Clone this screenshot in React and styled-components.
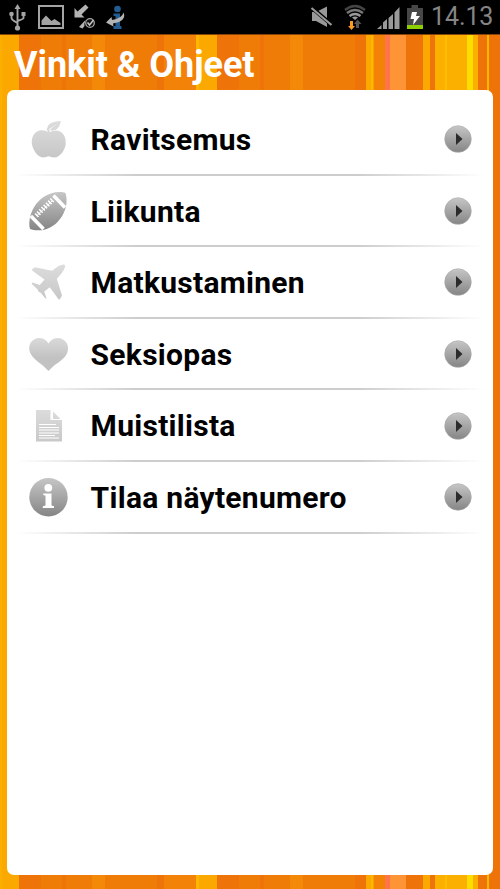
import React from "react";
import styled, { createGlobalStyle } from "styled-components";

const GlobalStyle = createGlobalStyle`
  * {
    box-sizing: border-box;
  }

  body {
    margin: 0;
    background: #000;
    font-family: Roboto, "Liberation Sans", sans-serif;
  }
`;

// [end of the stripe in px, colour]
const stripes = [
  [2, "#fbb000"],
  [19, "#fba800"],
  [41, "#ee7409"],
  [62, "#f07c08"],
  [66, "#ee7409"],
  [92, "#f07c08"],
  [105, "#f48808"],
  [157, "#f07c08"],
  [164.5, "#ee7409"],
  [196, "#f28208"],
  [199, "#ffb600"],
  [217, "#fba800"],
  [239, "#ee7409"],
  [260, "#f07c08"],
  [264, "#ee7409"],
  [290, "#f07c08"],
  [303, "#f48808"],
  [355, "#f07c08"],
  [366, "#ee7409"],
  [371, "#fba800"],
  [373, "#ffb800"],
  [374, "#fba000"],
  [385.5, "#f28208"],
  [390, "#ff7448"],
  [406, "#ff9436"],
  [423.5, "#ee7409"],
  [430, "#fba800"],
  [435, "#ee7409"],
  [445, "#fbb000"],
  [447, "#ffbc00"],
  [467, "#fbb000"],
  [473, "#fddc00"],
  [478, "#fbb000"],
  [487, "#ee7409"],
  [489, "#ffb800"],
  [500, "#ee7409"],
];

const stripeImage = stripes
  .map(([end, color], i) => `${color} ${i ? stripes[i - 1][0] : 0}px ${end}px`)
  .join(", ");

const Screen = styled.div`
  width: 500px;
  height: 889px;
  display: flex;
  flex-direction: column;
  overflow: hidden;
  background: linear-gradient(to right, ${stripeImage});
`;

const StatusBar = styled.div`
  flex: none;
  height: 34px;
  padding: 0 7px 0 6px;
  background: #000;
  display: flex;
  align-items: center;
  justify-content: space-between;
`;

const StatusIcons = styled.div`
  display: flex;
  align-items: center;

  svg {
    display: block;
  }
`;

const Clock = styled.span`
  width: 62px;
  margin-left: 5px;
  color: #858585;
  font-size: 25px;
  font-weight: 400;
  line-height: 34px;
  letter-spacing: -0.1px;
  white-space: nowrap;
`;

const Title = styled.h1`
  flex: none;
  height: 56px;
  margin: 0;
  padding: 0 14px;
  border-top: 1px solid #85440a;
  color: #fff;
  font-size: 36px;
  font-weight: 700;
  line-height: 60px;
  letter-spacing: -0.05px;
  white-space: nowrap;
`;

const Panel = styled.main`
  flex: 1;
  margin: 0 7px 14px;
  padding-top: 14px;
  border-radius: 7px;
  background: #fff;
`;

const List = styled.ul`
  margin: 0;
  padding: 0;
  list-style: none;
`;

const Row = styled.li`
  height: 71.6px;
  padding: 0 21px 1px;
  display: flex;
  align-items: center;
  background: linear-gradient(
      to right,
      transparent 8px,
      #cdcdcd 130px,
      #cdcdcd 350px,
      transparent 478px
    )
    bottom / 100% 2px no-repeat;
`;

const RowIcon = styled.svg`
  flex: none;
  width: 40px;
  height: 40px;
  margin-right: 22.6px;
`;

const Label = styled.span`
  flex: 1;
  padding-top: 1.5px;
  color: #000;
  font-size: 30px;
  font-weight: 700;
  line-height: 40px;
  letter-spacing: 0.28px;
  white-space: nowrap;
`;

const Arrow = styled.svg`
  flex: none;
  width: 28px;
  height: 28px;
`;

const Apple = () => (
  <g fill="url(#light)">
    <path d="M20 13.2C17 10.7 11.500 10.500 8 13.200C4 16.300 3 22 4.400 27C6 33 10.500 38.500 15.500 38.500C17.500 38.500 19 37.200 20.500 37.200C22.500 37.200 23.500 38.500 26 38.500C31.500 38.500 36.700 32 37.600 25.500C38.300 20 36.500 15 32.500 12.700C28.800 10.700 24.500 11.500 22 13.300L20.700 9.500L18.400 9.600Z" />
    <path d="M19.800 11C18 5.500 24 2 32.700 2C32.200 8.500 27.500 13.200 21.600 11L28 5.400Z" />
  </g>
);

const Football = () => (
  <>
    <path
      fill="url(#dark)"
      d="M2 38C-1 24 8 7 23 2.400C28 .8 34 .7 37.500 2C42 17 32 34 18 38.200C12 40 6 39.500 2 38Z"
    />
    <g fill="none" stroke="#fff">
      <path strokeWidth="3.600" d="M25.500 4.500L37 16.500M2.800 25L15.500 38" />
      <path strokeWidth="0.900" d="M9 24.500L24.500 9.500" />
      <path
        strokeWidth="1.500"
        d="M7 22.500L10.500 26M9 20.500L12.500 24M11.200 18.200L14.700 21.700M13.400 16L16.900 19.500M15.600 13.900L19.100 17.400M17.900 11.700L21.400 15.200M20.100 9.600L23.600 13.100M22.300 7.500L25.800 11"
      />
    </g>
  </>
);

const Plane = () => (
  <path
    fill="url(#light)"
    d="M36.800 3C38 4 36 8.500 33 12L28.800 16.700L34 33.500L31.800 37.500L30.500 37.300L21.800 25.300L16.300 29.600L18.600 36.800L17.200 36.300L12.700 30.700L11 30L10.300 29.300L9.700 27.400L3.600 21.700L4.500 20.400L11.800 23L16.500 17.500L4.400 8.800L4 7.300L7 5.200L24 8.800L29.500 4.800C32.500 2.800 35.500 1.800 36.800 3Z"
  />
);

const Heart = () => (
  <path
    fill="url(#heart)"
    d="M20.500 9.500C17 3.700 11 2.700 6.500 5.200C1 8.300 -.2 14.500 2.800 20C6.200 26.500 14 29.500 20.500 37C27 29.500 35.500 26.500 38.700 20C41.500 14.300 40 8.100 34.600 5.200C30 2.800 24 3.800 20.500 9.500Z"
  />
);

const Note = () => (
  <>
    <path fill="url(#light)" d="M8 4H22.500V14H34V35.500H8Z" />
    <path fill="url(#light)" d="M25 5.500L32.500 13H25Z" />
    <path
      stroke="#fff"
      strokeWidth="1.100"
      d="M11 18.500H28M11 21.500H31M11 24H31M11 27H31M11 29.500H27M11 32H31"
    />
  </>
);

const Info = () => (
  <>
    <circle cx="20.500" cy="20.200" r="19.200" fill="url(#dark)" />
    <circle cx="20.300" cy="10.800" r="3.900" fill="#fff" />
    <path fill="#fff" d="M15.300 16.500H23.500V28.500L26 29.200V31H14.800V29.200L17.500 28.500V18.700L15.300 18Z" />
  </>
);

const items = [
  { label: "Ravitsemus", icon: Apple },
  { label: "Liikunta", icon: Football },
  { label: "Matkustaminen", icon: Plane },
  { label: "Seksiopas", icon: Heart },
  { label: "Muistilista", icon: Note },
  { label: "Tilaa näytenumero", icon: Info },
];

const Gradients = () => (
  <svg width="0" height="0" display="block">
    <defs>
      <linearGradient id="light" x1="0" y1="0" x2="0" y2="40" gradientUnits="userSpaceOnUse">
        <stop offset="0" stopColor="#dedede" />
        <stop offset="1" stopColor="#c6c6c6" />
      </linearGradient>
      <linearGradient id="heart" x1="0" y1="0" x2="0" y2="1">
        <stop offset="0" stopColor="#dadada" />
        <stop offset="0.6" stopColor="#c2c2c2" />
      </linearGradient>
      <linearGradient id="dark" x1="0" y1="0" x2="0" y2="1">
        <stop offset="0" stopColor="#c6c6c6" />
        <stop offset="1" stopColor="#858585" />
      </linearGradient>
    </defs>
  </svg>
);

const Notifications = () => (
  <svg width="124" height="34" viewBox="6 0 124 34">
    <g fill="none" stroke="#a4a4a4" strokeWidth="1.900">
      <path d="M17.500 8V28M11.500 14V18Q11.500 20 17.500 23M23.500 14V18Q23.500 19 17.500 21" />
      <rect x="39" y="6" width="24" height="22" strokeWidth="2" />
    </g>
    <g fill="#a4a4a4">
      <path d="M17.500 4L20.500 9H14.500Z" />
      <circle cx="17.500" cy="28" r="2.600" />
      <circle cx="11.500" cy="14" r="2.300" />
      <path d="M21.500 12H25.500V16H21.500Z" />
      <path d="M41.500 25V20.500L46 15.500L51.500 21L54.500 19L60.500 23V25Z" />
    </g>
    <g fill="#b4b4b4">
      <path d="M85.500 4.500L88.500 7.500L81.500 14.500L84.500 17.500H74.500V8L77.500 11.500Z" />
      <path d="M79 27L84 21.500L85.500 20Q84 24 84.500 26L82.500 28.500Z" />
    </g>
    <circle cx="90" cy="23" r="4.300" fill="#111" stroke="#a4a4a4" strokeWidth="1.300" />
    <path d="M87.500 22.500L89.500 25L93.500 20" fill="none" stroke="#c4c4c4" strokeWidth="1.500" />
    <g fill="#235c91">
      <circle cx="117.500" cy="9" r="3.300" />
      <path d="M113.500 13.500H120V26H121.500V29H113.500V26H115.500V16H113.500Z" />
    </g>
    <path
      fill="#b4b4b4"
      d="M123.500 12.500Q127 21 113 23.500L113.500 26.500L106 22.500L111.500 17L112 20Q122 18.500 123.500 12.500Z"
    />
  </svg>
);

const Indicators = () => (
  <svg width="118" height="34" viewBox="308 0 118 34">
    <path fill="#999" d="M312 12H316L327 6.500V27L316 21H312Z" />
    <path stroke="#000" strokeWidth="4" d="M311 7L332 25" />
    <path stroke="#999" strokeWidth="2.200" d="M311.500 8L331.500 25" />
    <g fill="none" strokeWidth="2.300">
      <path stroke="#444" d="M345 10Q355 2 365 10" />
      <path stroke="#777" d="M347 13Q355 7 363 13" />
      <path stroke="#999" d="M349.500 16Q355 12 360.500 16" />
    </g>
    <path fill="#999" d="M352 17.500Q355 15.500 358 17.500L355 20Z" />
    <path fill="#fa9b22" d="M350 21H353V26H355L351.500 30L348 26H350Z" />
    <path fill="#555" d="M357.500 19.500L361.500 24H359V28H356V24H354Z" />
    <path
      fill="#999"
      d="M377 29L381.500 25V29ZM383 29V22.500L387 19V29ZM388.500 29V18L393 14V29ZM394.500 29V12.500L399.500 7V29Z"
    />
    <path fill="#474747" d="M407 8H411.500V5H418V8H423V29H407Z" />
    <path fill="#8fce00" d="M407 25H423V29H407Z" />
    <path fill="#fff" d="M412 12H417L416 16H420L413 25L414 19H410.500Z" />
  </svg>
);

const App = () => (
  <>
    <GlobalStyle />
    <Screen>
      <StatusBar>
        <StatusIcons>
          <Notifications />
        </StatusIcons>
        <StatusIcons>
          <Indicators />
          <Clock>14.13</Clock>
        </StatusIcons>
      </StatusBar>
      <Title>Vinkit &amp; Ohjeet</Title>
      <Panel>
        <Gradients />
        <List>
          {items.map(({ label, icon: Icon }) => (
            <Row key={label}>
              <RowIcon viewBox="0 0 40 40" overflow="visible">
                <Icon />
              </RowIcon>
              <Label>{label}</Label>
              <Arrow viewBox="0 0 28 28">
                <circle cx="14" cy="14" r="13.300" fill="url(#dark)" stroke="#aaa" strokeWidth=".6" />
                <path fill="#2b2b2b" d="M12 8L18.500 14L12 20Z" />
              </Arrow>
            </Row>
          ))}
        </List>
      </Panel>
    </Screen>
  </>
);

export default App;
